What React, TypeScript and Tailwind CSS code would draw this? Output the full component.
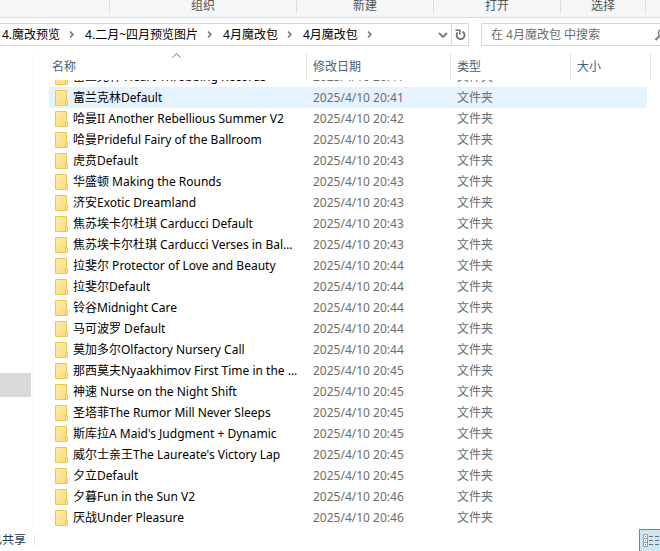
const FILES: [string, string][] = [
  ["富兰克林 Heart-Throbbing Records", "20:41"],
  ["富兰克林Default", "20:41"],
  ["哈曼II Another Rebellious Summer V2", "20:42"],
  ["哈曼Prideful Fairy of the Ballroom", "20:43"],
  ["虎贲Default", "20:43"],
  ["华盛顿 Making the Rounds", "20:43"],
  ["济安Exotic Dreamland", "20:43"],
  ["焦苏埃卡尔杜琪 Carducci Default", "20:43"],
  ["焦苏埃卡尔杜琪 Carducci Verses in Balmoral", "20:43"],
  ["拉斐尔 Protector of Love and Beauty", "20:44"],
  ["拉斐尔Default", "20:44"],
  ["铃谷Midnight Care", "20:44"],
  ["马可波罗 Default", "20:44"],
  ["莫加多尔Olfactory Nursery Call", "20:44"],
  ["那西莫夫Nyaakhimov First Time in the Bath", "20:45"],
  ["神速 Nurse on the Night Shift", "20:45"],
  ["圣塔菲The Rumor Mill Never Sleeps", "20:45"],
  ["斯库拉A Maid's Judgment + Dynamic", "20:45"],
  ["威尔士亲王The Laureate's Victory Lap", "20:45"],
  ["夕立Default", "20:45"],
  ["夕暮Fun in the Sun V2", "20:46"],
  ["厌战Under Pleasure", "20:46"],
];

const SELECTED = 1;
const CRUMBS = ["4.魔改预览", "4.二月~四月预览图片", "4月魔改包", "4月魔改包"];
const RIBBON = ["", "组织", "新建", "打开", "选择"];
const COLUMNS = ["名称", "修改日期", "类型", "大小"];

function FolderIcon() {
  return (
    <svg width="13" height="16" viewBox="0 0 13 16" className="shrink-0" aria-hidden="true">
      <defs>
        <linearGradient id="folder" x1="0" y1="0" x2="1" y2="1">
          <stop offset="0" stopColor="#ffe9a6" />
          <stop offset="1" stopColor="#fbdc80" />
        </linearGradient>
      </defs>
      <path d="M.5.5h11v15H.5z" fill="url(#folder)" stroke="#ecc94f" />
      <path d="M10.5 10.5h2v5h-2z" fill="#ffe697" stroke="#ecc94f" />
    </svg>
  );
}

function CrumbArrow() {
  return (
    <svg width="5" height="7" viewBox="0 0 5 7" className="mr-[11px] ml-[9px] shrink-0" aria-hidden="true">
      <path d="M1 .5 4 3.5 1 6.5" fill="none" stroke="#707070" strokeWidth="1.5" />
    </svg>
  );
}

function Ribbon() {
  return (
    <div className="grid h-[18px] shrink-0 grid-cols-[110px_187px_137px_127px_85px_1fr] border-b border-[#dadbdc] bg-[#f5f6f7] text-[#555]">
      {RIBBON.map((label) => (
        <div key={label} className="h-[14px] border-r border-[#dfe0e1] text-center leading-3">
          {label}
        </div>
      ))}
    </div>
  );
}

function AddressRow() {
  return (
    <div className="mt-[5px] flex h-[23px] shrink-0 gap-3">
      <div className="flex w-[469px] border border-l-0 border-[#d9d9d9]">
        <nav aria-label="路径" className="flex flex-1 items-center pl-[2px] text-black">
          {CRUMBS.map((crumb, i) => (
            <div key={i} className="flex items-center">
              <button type="button" className="whitespace-nowrap">{crumb}</button>
              <CrumbArrow />
            </div>
          ))}
        </nav>
        <button type="button" aria-label="以前的位置" className="flex w-4 items-center justify-center">
          <svg width="10" height="6" viewBox="0 0 10 6">
            <path d="m1 1 4 4 4-4" fill="none" stroke="#808080" strokeWidth="2" />
          </svg>
        </button>
        <button type="button" aria-label="刷新" className="flex w-[17px] items-center justify-center border-l border-[#d9d9d9]">
          <svg width="11" height="12" viewBox="0 0 11 12">
            <path d="M7.5 2.6A4 4 0 1 1 2.6 3.4" fill="none" stroke="#707070" strokeWidth="1.8" />
            <path d="M.5 1.2h4.3v4.3" fill="none" stroke="#707070" strokeWidth="1.6" />
          </svg>
        </button>
      </div>
      <div className="flex min-w-0 flex-1 items-center overflow-hidden border border-r-0 border-[#d9d9d9]">
        <input
          type="search"
          aria-label="搜索"
          placeholder="在 4月魔改包 中搜索"
          className="min-w-0 flex-1 pl-[9px] outline-none placeholder:text-[#6d6d6d]"
        />
        <svg width="5" height="12" viewBox="0 0 5 12" className="shrink-0" aria-hidden="true">
          <path d="M.5 11 5 6.5" stroke="#808080" strokeWidth="2" />
          <circle cx="7.5" cy="4" r="4" fill="none" stroke="#808080" strokeWidth="1.5" />
        </svg>
      </div>
    </div>
  );
}

function FileTable() {
  return (
    <table className="flex min-h-0 min-w-0 flex-1 flex-col pl-[15px] text-left">
      <thead className="block shrink-0 text-[#4c607a]">
        <tr className="grid h-[27px] grid-cols-[258px_144px_120px_80px]">
          {COLUMNS.map((column, i) => (
            <th
              key={column}
              className={`relative border-r border-[#e5e5e5] font-normal leading-[27px] ${i === 0 ? "pl-[3px]" : "pl-[6px]"}`}
            >
              {column}
              {i === 0 && (
                <svg width="9" height="5" viewBox="0 0 9 5" className="absolute top-0 left-[123px]" aria-hidden="true">
                  <path d="M.5 4.5l4-4 4 4" fill="none" stroke="#707070" />
                </svg>
              )}
            </th>
          ))}
        </tr>
      </thead>
      <tbody className="flex min-h-0 flex-1 flex-col justify-end overflow-hidden text-[#6d6d6d]">
        {FILES.map(([name, time], i) => (
          <tr
            key={name}
            className={`grid h-[21px] w-[598px] shrink-0 grid-cols-[258px_144px_1fr] items-center ${i === SELECTED ? "bg-[#e5f3ff]" : ""}`}
          >
            <td className="flex min-w-0 items-center gap-[5px] pr-[7px] pl-[6px] text-black">
              <FolderIcon />
              <span className="truncate">{name}</span>
            </td>
            <td className="pl-[6px]">2025/4/10 {time}</td>
            <td className="pl-[6px]">文件夹</td>
          </tr>
        ))}
      </tbody>
    </table>
  );
}

function StatusBar() {
  return (
    <footer className="flex h-[23px] shrink-0 items-end justify-between">
      <div className="flex h-[17px] items-start">
        <div className="flex w-[26px] justify-end overflow-hidden whitespace-nowrap leading-3 text-[#1e395b]">已共享</div>
        <div className="ml-2 h-3 w-px bg-[#e8e8e8]" />
      </div>
      <button type="button" aria-label="详细信息" className="h-[22px] w-[21px] border-t border-l border-[#2d9bd3] bg-[#cbe8f6]">
        <svg width="20" height="21" viewBox="0 0 20 21">
          <path d="M3.5 4.5h4v12h-4zM3.5 8.5h4M3.5 12.5h4" fill="#fff" stroke="#999" />
          <path d="M9 6.5h4M15 6.5h4M9 10.5h4M15 10.5h4M9 14.5h4M15 14.5h4" stroke="#6d6d6d" />
          <path d="M5 6h1v1H5z" fill="#4a8a5a" />
          <path d="M5 10h1v1H5z" fill="#3f8fe0" />
          <path d="M5 14h1v1H5z" fill="#d02020" />
        </svg>
      </button>
    </footer>
  );
}

export default function App() {
  return (
    <div className="flex h-screen flex-col overflow-hidden bg-white font-['Noto_Sans','Noto_Sans_CJK_SC',sans-serif] text-[12px] leading-4">
      <Ribbon />
      <AddressRow />
      <main className="mt-[7px] flex min-h-0 flex-1">
        <aside className="w-[34px] shrink-0 border-r border-[#f2f2f2] pt-[320px]">
          <div className="h-6 w-[31px] bg-[#d9d9d9]" />
        </aside>
        <FileTable />
      </main>
      <StatusBar />
    </div>
  );
}
